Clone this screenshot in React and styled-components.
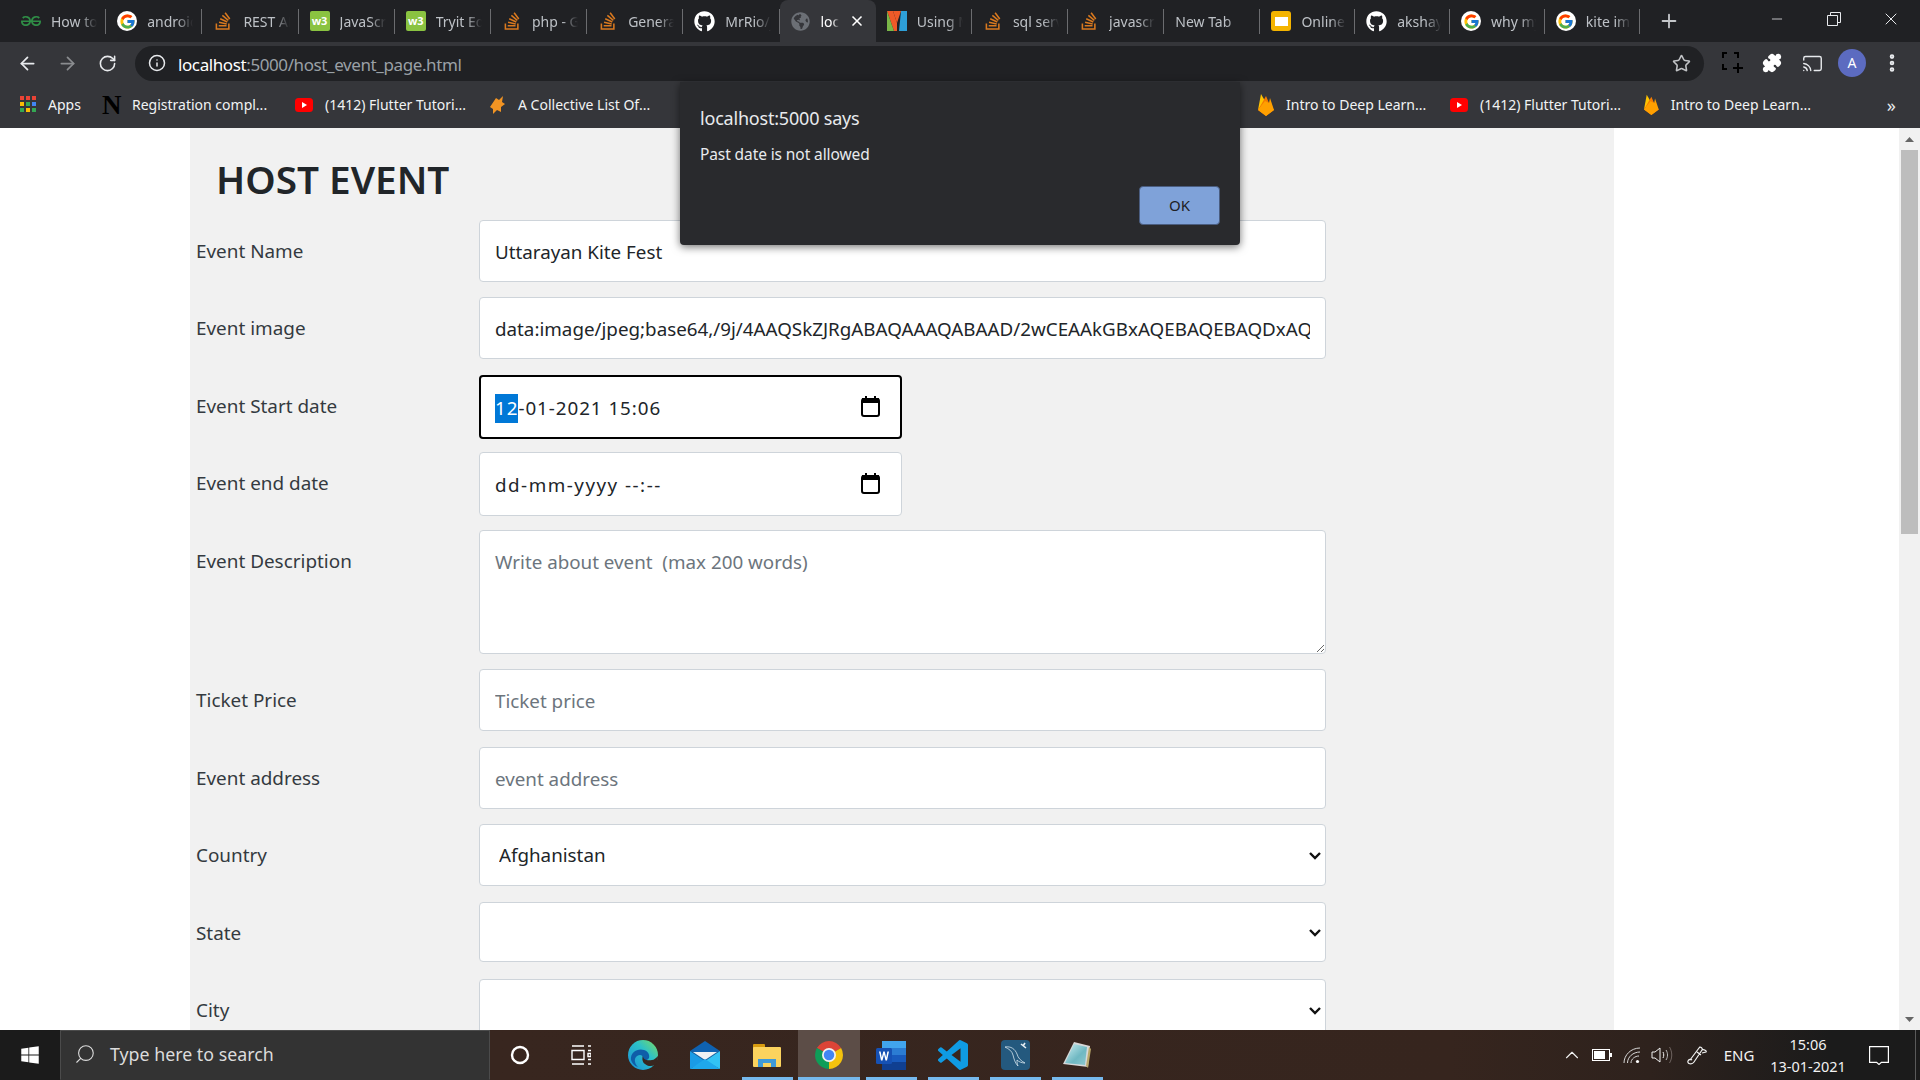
import React from "react";
import styled, {createGlobalStyle} from "styled-components";
import {ArrowLeft, ArrowRight, RotateCw, Info, Star, Puzzle, Cast, MoreVertical, Plus, X, Minus, Search, ChevronUp} from "lucide-react";
import {FaGithub, FaStackOverflow, FaGlobeAmericas, FaWindows} from "react-icons/fa";
import {FcGoogle} from "react-icons/fc";
import {SiGeeksforgeeks} from "react-icons/si";

const UI_FONT = `"Noto Sans", "Open Sans", sans-serif`;

const GlobalStyle = createGlobalStyle`
  html, body {
    margin: 0;
    padding: 0;
    overflow: hidden;
    font-family: ${UI_FONT};
  }
  * {
    box-sizing: border-box;
  }
`;

const Screen = styled.div`
  position: relative;
  width: 1920px;
  height: 1080px;
  display: flex;
  flex-direction: column;
  overflow: hidden;
  background: #fff;
`;

/* chrome tabs */
const TabStrip = styled.div`
  height: 42px;
  flex: none;
  display: flex;
  align-items: center;
  padding-left: 10px;
  background: #202124;
`;

const Tab = styled.div`
  flex: 0 0 96.2px;
  min-width: 0;
  height: 42px;
  display: flex;
  align-items: center;
  color: ${p => (p.$active ? "#fff" : "#bdc1c6")};
  background: ${p => (p.$active ? "#35363a" : "transparent")};
  border-radius: 8px 8px 0 0;
  &:nth-child(n + 14) {
    flex-basis: 94.8px;
  }
`;

const TabInner = styled.div`
  width: 100%;
  min-width: 0;
  height: 25px;
  display: flex;
  align-items: center;
  gap: 10px;
  padding-left: 11px;
  border-right: 1px solid ${p => (p.$active ? "transparent" : "#6b6c6f")};
  font-size: 14px;
`;

const FaviconBox = styled.span`
  flex: 0 0 20px;
  height: 20px;
  display: flex;
  align-items: center;
  justify-content: center;
  color: ${p => p.$color || "#fff"};
`;

const GoogleDisc = styled(FaviconBox)`
  background: #fff;
  border-radius: 50%;
`;

const W3Badge = styled.span`
  flex: 0 0 20px;
  height: 20px;
  border-radius: 2px;
  background: #8ac341;
  color: #fff;
  font-size: 11px;
  font-weight: 700;
  line-height: 20px;
  text-align: center;
`;

const SlidesBadge = styled.span`
  flex: 0 0 20px;
  height: 20px;
  border-radius: 3px;
  background: #f4b400;
  display: flex;
  align-items: center;
  justify-content: center;
  &::before {
    content: "";
    width: 13px;
    height: 9px;
    background: #fff;
  }
`;

const TabTitle = styled.span`
  flex: 1;
  min-width: 0;
  margin-right: 8px;
  overflow: hidden;
  white-space: nowrap;
  -webkit-mask-image: linear-gradient(90deg, #000 65%, transparent 100%);
  mask-image: linear-gradient(90deg, #000 65%, transparent 100%);
`;

const TabClose = styled.span`
  flex: none;
  display: flex;
  margin-right: 10px;
  margin-left: -8px;
  color: #fff;
`;

const NewTab = styled.div`
  margin-left: 18px;
  display: flex;
  color: #c4c7ca;
`;

const WindowControls = styled.div`
  margin-left: auto;
  display: flex;
  height: 42px;
  padding-right: 1px;
  color: #e8eaed;
`;

const WindowButton = styled.div`
  width: 57px;
  height: 38px;
  display: flex;
  align-items: center;
  justify-content: center;
`;

/* address bar */
const Toolbar = styled.div`
  height: 42px;
  flex: none;
  display: flex;
  align-items: center;
  padding: 0 8px 0 7px;
  background: #35363a;
`;

const ToolButton = styled.div`
  width: ${p => p.$w || "40px"};
  height: 36px;
  display: flex;
  align-items: center;
  justify-content: center;
  color: ${p => p.$color || "#e8eaed"};
`;

const Omnibox = styled.div`
  flex: 1;
  height: 35px;
  margin: 0 8px;
  padding: 0 13px;
  display: flex;
  align-items: center;
  gap: 12px;
  border-radius: 18px;
  background: #202124;
  color: #e8eaed;
`;

const UrlText = styled.div`
  flex: 1;
  padding-top: 2px;
  font-size: 17px;
  letter-spacing: -0.4px;
  color: #9aa0a6;
  b {
    font-weight: 400;
    color: #fff;
  }
`;

const Avatar = styled.div`
  width: 28px;
  height: 28px;
  border-radius: 50%;
  background: #5c6bc0;
  color: #fff;
  font-size: 14px;
  line-height: 28px;
  text-align: center;
`;

/* bookmarks */
const BookmarksBar = styled.div`
  height: 44px;
  flex: none;
  display: flex;
  align-items: center;
  padding: 0 0 3px 20px;
  background: #35363a;
`;

const Bookmark = styled.div`
  flex: 0 0 ${p => p.$w}px;
  min-width: 0;
  display: flex;
  align-items: center;
  gap: ${p => p.$gap || 12}px;
  color: #f1f3f4;
  font-size: 14px;
  white-space: nowrap;
`;

const NotionN = styled.span`
  width: 19px;
  font-family: "Liberation Serif", serif;
  font-size: 27px;
  font-weight: 700;
  line-height: 24px;
  color: #000;
`;

const Spacer = styled.div`
  flex: 1;
`;

const MoreBookmarks = styled.div`
  flex: 0 0 109px;
  padding-right: 24px;
  text-align: right;
  font-size: 18px;
  line-height: 20px;
  color: #e8eaed;
`;

/* page */
const Viewport = styled.div`
  flex: 1;
  min-height: 0;
  display: flex;
`;

const PageBody = styled.main`
  flex: 1;
  min-width: 0;
  padding-left: 190px;
  overflow: hidden;
`;

const Panel = styled.div`
  width: 1424px;
  height: 100%;
  padding-left: 6px;
  background: #f1f1f1;
  color: #212529;
`;

const Heading = styled.h1`
  height: 92px;
  margin: 0;
  padding: 23px 0 0 20px;
  font-size: 38.7px;
  font-weight: 600;
  line-height: 56px;
`;

const FormRow = styled.div`
  display: grid;
  grid-template-columns: 283px 847px;
  margin-bottom: ${p => p.$gap}px;
`;

const FieldLabel = styled.label`
  padding-top: 17px;
  font-size: 18.9px;
  line-height: 28px;
  color: #343a40;
`;

const TextField = styled.input`
  display: block;
  width: 100%;
  height: ${p => p.$h || 62}px;
  padding: 1px 15px 0;
  border: 1px solid #ced4da;
  border-radius: 4px;
  background: #fff;
  font-family: ${UI_FONT};
  font-size: 18.8px;
  color: #212529;
  outline: none;
  &::placeholder {
    color: #6c757d;
    opacity: 1;
  }
`;

const TextArea = styled.textarea`
  display: block;
  width: 100%;
  height: 124px;
  padding: 16px 15px;
  border: 1px solid #ced4da;
  border-radius: 4px;
  background: #fff;
  font-family: ${UI_FONT};
  font-size: 18.8px;
  line-height: 30px;
  resize: vertical;
  outline: none;
  &::placeholder {
    color: #6c757d;
    opacity: 1;
  }
`;

const DateField = styled.div`
  width: 423px;
  height: 64px;
  padding: 0 ${p => (p.$focused ? 20 : 21)}px 0 ${p => (p.$focused ? 14 : 15)}px;
  display: flex;
  align-items: center;
  justify-content: space-between;
  border: ${p => (p.$focused ? "2px solid #000" : "1px solid #ced4da")};
  border-radius: 4px;
  background: #fff;
  font-size: 18.8px;
  color: #212529;
  white-space: pre;
`;

const DateText = styled.span`
  padding-top: 2px;
  letter-spacing: ${p => p.$tracking}px;
`;

const DateSegment = styled.span`
  display: inline-block;
  line-height: 29px;
  background: #0078d7;
  color: #fff;
`;

const CalendarGlyph = styled.svg`
  flex: none;
  margin-bottom: 2px;
`;

const SelectWrap = styled.div`
  position: relative;
  height: ${p => p.$h || 62}px;
`;

const Select = styled.select`
  display: block;
  width: 100%;
  height: 100%;
  padding: 0 19px;
  appearance: none;
  border: 1px solid #ced4da;
  border-radius: 4px;
  background: #fff;
  font-family: ${UI_FONT};
  font-size: 18.8px;
  color: #212529;
  outline: none;
`;

const SelectArrow = styled.svg`
  position: absolute;
  right: 5px;
  top: 50%;
  margin-top: -4px;
  pointer-events: none;
`;

const Scrollbar = styled.div`
  flex: 0 0 21px;
  display: flex;
  flex-direction: column;
  align-items: center;
  background: #f1f1f1;
`;

const ScrollArrow = styled.div`
  flex: none;
  height: 22px;
  display: flex;
  align-items: center;
  justify-content: center;
`;

const ScrollThumb = styled.div`
  flex: none;
  width: 17px;
  height: 384px;
  background: #bdbdbd;
`;

/* alert() dialog */
const AlertBox = styled.div`
  position: absolute;
  left: 680px;
  top: 82px;
  width: 560px;
  height: 163px;
  padding: 20px;
  display: flex;
  flex-direction: column;
  border-radius: 0 0 4px 4px;
  background: #292a2d;
  box-shadow: 0 2px 8px rgba(0, 0, 0, 0.55);
  color: #e8eaed;
`;

const AlertTitle = styled.div`
  font-size: 18px;
  line-height: 32px;
  letter-spacing: -0.2px;
`;

const AlertMessage = styled.div`
  margin-top: 8px;
  font-size: 15.5px;
  line-height: 24px;
  letter-spacing: -0.1px;
`;

const AlertOk = styled.button`
  align-self: flex-end;
  width: 81px;
  height: 41px;
  margin-top: 20px;
  padding: 0 0 2px;
  border: 1px solid #4a5d80;
  border-radius: 4px;
  background: #7fa2d9;
  color: #202124;
  font-family: ${UI_FONT};
  font-size: 15px;
`;

/* windows taskbar */
const Taskbar = styled.footer`
  height: 50px;
  flex: none;
  display: flex;
  align-items: stretch;
  color: #fff;
  background: linear-gradient(90deg, #1b1b1b 0, #1b1b1b 60px, #38261f 490px, #36251e 1450px, #2e221d 1650px, #1b1b1b 1830px);
`;

const StartButton = styled.div`
  flex: 0 0 60px;
  display: flex;
  align-items: center;
  justify-content: center;
`;

const SearchBox = styled.div`
  flex: 0 0 430px;
  display: flex;
  align-items: center;
  gap: 14px;
  padding: 0 0 2px 13px;
  border: 1px solid #4b4b4b;
  border-bottom-color: #333;
  background: #333;
  font-size: 17.8px;
  color: #dcdcdc;
`;

const FlipIcon = styled.span`
  display: flex;
  transform: scaleX(-1);
`;

const TaskSlot = styled.div`
  position: relative;
  flex: 0 0 ${p => p.$w || 62}px;
  display: flex;
  align-items: center;
  justify-content: center;
  background: ${p => (p.$active ? "#5c4d47" : "transparent")};
  &::after {
    content: "";
    display: ${p => (p.$open ? "block" : "none")};
    position: absolute;
    left: ${p => (p.$active ? 0 : 6)}px;
    right: ${p => (p.$active ? 0 : 5)}px;
    bottom: 0;
    height: 3px;
    background: #76b9ed;
  }
`;

const Tray = styled.div`
  margin-left: auto;
  display: flex;
  align-items: stretch;
`;

const TrayItem = styled.div`
  flex: 0 0 ${p => p.$w}px;
  display: flex;
  flex-direction: column;
  align-items: center;
  justify-content: center;
  font-size: ${p => (p.$text ? "15px" : "14.5px")};
  line-height: 22px;
  color: #f2f2f2;
`;

const ShowDesktop = styled.div`
  flex: 0 0 13px;
  margin-right: 4px;
  border-right: 1px solid #5a5a5a;
`;

const GoogleIcon = () => <GoogleDisc><FcGoogle size={17}/></GoogleDisc>;
const StackIcon = () => <FaviconBox $color="#d9791f"><FaStackOverflow size={20}/></FaviconBox>;
const W3Icon = () => <W3Badge>w3</W3Badge>;
const GithubIcon = () => <FaviconBox $color="#fff"><FaGithub size={21}/></FaviconBox>;

const VercelV = () => (
    <FaviconBox>
        <svg width="20" height="20" viewBox="0 0 20 20">
            <polygon points="0,0 6,0 10,12 10,20 7,20" fill="#ef5a28"/>
            <polygon points="0,0 7,20 0,20" fill="#7ab648"/>
            <polygon points="14,0 20,0 20,20 12,20" fill="#2e9fd8"/>
            <polygon points="6,0 14,0 10,12" fill="#ef5a28"/>
        </svg>
    </FaviconBox>
);

const tabs = [
    {title: "How to", icon: <FaviconBox $color="#2f8d46"><SiGeeksforgeeks size={20}/></FaviconBox>},
    {title: "android", icon: <GoogleIcon/>},
    {title: "REST API", icon: <StackIcon/>},
    {title: "JavaScript", icon: <W3Icon/>},
    {title: "Tryit Editor", icon: <W3Icon/>},
    {title: "php - Get", icon: <StackIcon/>},
    {title: "General", icon: <StackIcon/>},
    {title: "MrRio/jsPDF", icon: <GithubIcon/>},
    {title: "localhost", icon: <FaviconBox $color="#6b6f75"><FaGlobeAmericas size={19}/></FaviconBox>, active: true},
    {title: "Using Mat", icon: <VercelV/>},
    {title: "sql server", icon: <StackIcon/>},
    {title: "javascript", icon: <StackIcon/>},
    {title: "New Tab"},
    {title: "Online", icon: <SlidesBadge/>},
    {title: "akshay", icon: <GithubIcon/>},
    {title: "why my", icon: <GoogleIcon/>},
    {title: "kite image", icon: <GoogleIcon/>},
];

const AppsIcon = () => (
    <svg width="17" height="17" viewBox="0 0 17 17">
        <rect x="0" y="0" width="4" height="4" fill="#ea4335"/>
        <rect x="6" y="0" width="4" height="4" fill="#ea4335"/>
        <rect x="12" y="0" width="4" height="4" fill="#ea4335"/>
        <rect x="0" y="6" width="4" height="4" fill="#fbbc04"/>
        <rect x="6" y="6" width="4" height="4" fill="#34a853"/>
        <rect x="12" y="6" width="4" height="4" fill="#4285f4"/>
        <rect x="0" y="12" width="4" height="4" fill="#34a853"/>
        <rect x="6" y="12" width="4" height="4" fill="#fbbc04"/>
        <rect x="12" y="12" width="4" height="4" fill="#34a853"/>
    </svg>
);

const YoutubeIcon = () => (
    <svg width="18" height="14" viewBox="0 0 18 14">
        <rect width="18" height="14" rx="3.5" fill="#f00"/>
        <polygon points="7,4 12,7 7,10" fill="#fff"/>
    </svg>
);

const FirebaseIcon = () => (
    <svg width="16" height="23" viewBox="0 0 16 23">
        <polygon points="0,17 3,1 7,8" fill="#ffc400"/>
        <polygon points="0,17 8,3 11,10 16,17 8,23" fill="#f57c00"/>
        <polygon points="0,17 7,8 11,10 12,5 16,17 8,23" fill="#ffa000"/>
    </svg>
);

const StarGroupIcon = () => (
    <svg width="17" height="20" viewBox="0 0 17 20">
        <polygon points="1,12 7,3 10,5 14,1 13,7 16,9 12,12 12,17 8,15 4,19 4,14" fill="#f29423"/>
    </svg>
);

const CaptureIcon = () => (
    <svg width="22" height="24" viewBox="0 0 22 24" fill="none" stroke="#000" strokeWidth="2">
        <path d="M6 2H2v5M13 2h4v5M2 13v5h4M17 12v10M12 17h10"/>
    </svg>
);

const CalendarIcon = () => (
    <CalendarGlyph width="19" height="21" viewBox="0 0 19 21">
        <rect x="4" y="0" width="2" height="3" fill="#000"/>
        <rect x="13" y="0" width="2" height="3" fill="#000"/>
        <rect x="1" y="3" width="17" height="17" rx="2" fill="none" stroke="#000" strokeWidth="2"/>
        <rect x="1" y="2" width="17" height="5" fill="#000"/>
    </CalendarGlyph>
);

const Chevron = () => (
    <SelectArrow width="12" height="10" viewBox="0 0 12 10" fill="none" stroke="#111" strokeWidth="2.4">
        <path d="M1 2l5 5 5-5"/>
    </SelectArrow>
);

const ArrowGlyph = ({down}) => (
    <svg width="9" height="5" viewBox="0 0 9 5">
        <polygon points={down ? "0,0 9,0 4.5,5" : "4.5,0 9,5 0,5"} fill="#666"/>
    </svg>
);

const EdgeIcon = () => (
    <svg width="30" height="30" viewBox="0 0 30 30">
        <defs>
            <linearGradient id="edgeTop" x1="0" y1="1" x2="1" y2="0">
                <stop offset="0" stopColor="#1a8fd8"/>
                <stop offset="0.6" stopColor="#2cc1c8"/>
                <stop offset="1" stopColor="#7fdc5e"/>
            </linearGradient>
        </defs>
        <circle cx="15" cy="15" r="15" fill="url(#edgeTop)"/>
        <path d="M3 20C2 12 10 8 16 10c4 1 6 5 5 8-2 3-6 3-6 0 0-3-3-4-6-2-3 2-3 7 1 11-4-1-6-4-7-7z" fill="#0f5ea8"/>
        <path d="M15 16c0 4 5 5 9 4 2 0 4-2 6-4 0 4-1 7-3 9-4 2-8 1-10-1-3-2-3-6-2-8z" fill="#38261f"/>
    </svg>
);

const MailIcon = () => (
    <svg width="30" height="28" viewBox="0 0 30 28">
        <polygon points="0,10 15,0 30,10 15,20" fill="#0f62b0"/>
        <polygon points="3,11 27,11 15,19" fill="#eef1f3"/>
        <polygon points="0,10 15,20 0,28" fill="#1a9be6"/>
        <polygon points="30,10 15,20 30,28" fill="#32c3f5"/>
        <polygon points="0,28 15,18 30,28" fill="#1fa8ec"/>
    </svg>
);

const FolderIcon = () => (
    <svg width="28" height="23" viewBox="0 0 28 23">
        <rect x="0" y="0" width="12" height="6" rx="1" fill="#d79b10"/>
        <rect x="0" y="3" width="28" height="20" rx="1" fill="#fbd35e"/>
        <path d="M5 23v-8h18v8h-5v-4h-8v4z" fill="#3f9ad8"/>
    </svg>
);

const ChromeIcon = () => (
    <svg width="28" height="28" viewBox="4 4 40 40">
        <path d="M24 24L6.7 14A20 20 0 0 1 41.3 14Z" fill="#db4437"/>
        <path d="M24 24L41.3 14A20 20 0 0 1 24 44Z" fill="#f4c20d"/>
        <path d="M24 24L24 44A20 20 0 0 1 6.7 14Z" fill="#0f9d58"/>
        <circle cx="24" cy="24" r="10" fill="#f1f1f1"/>
        <circle cx="24" cy="24" r="7.500" fill="#4285f4"/>
    </svg>
);

const WordIcon = () => (
    <svg width="30" height="29" viewBox="0 0 30 29">
        <rect x="6" y="0" width="24" height="8" fill="#41a5ee"/>
        <rect x="6" y="7" width="24" height="8" fill="#2b7cd3"/>
        <rect x="6" y="14" width="24" height="8" fill="#185abd"/>
        <rect x="6" y="21" width="24" height="8" fill="#103f91"/>
        <rect x="0" y="7" width="16" height="16" rx="1.5" fill="#1651b4"/>
        <path d="M3 10.500l2 9h1.500l1.500-6 1.500 6h1.500l2-9h-1.600l-1.200 6-1.500-6h-1.400l-1.500 6-1.200-6z" fill="#fff"/>
    </svg>
);

const VsCodeIcon = () => (
    <svg width="30" height="30" viewBox="0 0 24 24" fill="#0f9be3">
        <path d="M23.15 2.587L18.21.21a1.494 1.494 0 0 0-1.705.29l-9.46 8.63-4.12-3.128a.999.999 0 0 0-1.276.057L.327 7.261A1 1 0 0 0 .326 8.74L3.899 12 .326 15.26a1 1 0 0 0 .001 1.479L1.65 17.94a.999.999 0 0 0 1.276.057l4.12-3.128 9.46 8.63a1.492 1.492 0 0 0 1.704.29l4.942-2.377A1.5 1.5 0 0 0 24 20.06V3.939a1.5 1.5 0 0 0-.85-1.352zm-5.146 14.861L10.826 12l7.178-5.448v10.896z"/>
    </svg>
);

const MysqlIcon = () => (
    <svg width="29" height="30" viewBox="0 0 29 30">
        <rect width="29" height="30" rx="4" fill="#24597e"/>
        <path d="M4 7c6-1 10 2 12 7 1 4 4 7 8 9-3 0-6-1-8-3 0 2 0 4 1 6-3-3-4-7-5-11-1-4-4-6-8-8z" fill="none" stroke="#d6e4ee" strokeWidth="0.8"/>
        <path d="M20 4l5 4M24 3l-2 3" fill="none" stroke="#e6eef4" strokeWidth="1.6"/>
    </svg>
);

const NotepadIcon = () => (
    <svg width="28" height="28" viewBox="0 0 28 28">
        <defs>
            <linearGradient id="padFill" x1="0" y1="0" x2="1" y2="1">
                <stop offset="0" stopColor="#cdeff2"/>
                <stop offset="0.6" stopColor="#6fb8c2"/>
                <stop offset="1" stopColor="#8ec9cf"/>
            </linearGradient>
        </defs>
        <polygon points="11,1 27,5 25,26 0,23" fill="#d8d8d8"/>
        <polygon points="11,3 24,6 22,24 2,22" fill="url(#padFill)"/>
        <polygon points="26,6 28,8 25,27 23,25" fill="#b9a86a"/>
    </svg>
);

const TaskViewIcon = () => (
    <svg width="20" height="20" viewBox="0 0 20 20" fill="none" stroke="#fff" strokeWidth="1.4">
        <path d="M1 1h12M1 19h12M1 5.500h12v9H1zM17 1h3M17 5.500h3M17 14.500h3M17 19h3M17 8.500h3v3h-3z"/>
    </svg>
);

const BatteryIcon = () => (
    <svg width="20" height="12" viewBox="0 0 20 12">
        <rect x="0.5" y="0.5" width="17" height="11" fill="none" stroke="#fff"/>
        <rect x="2" y="2" width="11" height="8" fill="#fff"/>
        <rect x="18" y="4" width="2" height="4" fill="#fff"/>
    </svg>
);

const WifiIcon = () => (
    <svg width="18" height="17" viewBox="0 0 18 17" fill="none" stroke="#d8d8d8" strokeWidth="1">
        <path d="M1 16C1 8 8 1 17 1M4.500 16C4.500 10 10 5 17 5M8 16c0-4 4-7 8-7"/>
        <circle cx="14.5" cy="14.5" r="1.6" fill="#fff" stroke="none"/>
    </svg>
);

const SpeakerIcon = () => (
    <svg width="22" height="18" viewBox="0 0 22 18" fill="none" stroke="#f2f2f2" strokeWidth="1">
        <path d="M1 6h3l5-4v14l-5-4H1zM12 6c1 2 1 4 0 6"/>
        <path d="M15 4c2 3 2 7 0 10" stroke="#bbb"/>
        <path d="M18.500 1c3 5 3 11 0 16" stroke="#6f6460"/>
    </svg>
);

const PenIcon = () => (
    <svg width="21" height="21" viewBox="0 0 21 21" fill="none" stroke="#f2f2f2" strokeWidth="1.2">
        <path d="M3 15L12 3c1-2 4 0 3 2L7 17c-2 3-7 2-6-1 1-2 3-2 4-1M15 5c2-1 5 1 4 2l-4 1M10 7l4 3"/>
    </svg>
);

const NotifyIcon = () => (
    <svg width="20" height="19" viewBox="0 0 20 19" fill="none" stroke="#fff" strokeWidth="1.2">
        <path d="M.6.6h18.800v15.800h-7L10 18.500l-2.400-2.100h-7z"/>
    </svg>
);

const App = () => {
    return (
        <Screen>
            <GlobalStyle/>
            <TabStrip>
                {tabs.map(tab => (
                    <Tab key={tab.title} $active={tab.active}>
                        <TabInner $active={tab.active}>
                            {tab.icon}
                            <TabTitle>{tab.title}</TabTitle>
                            {tab.active && <TabClose><X size={16} strokeWidth={2.5}/></TabClose>}
                        </TabInner>
                    </Tab>
                ))}
                <NewTab><Plus size={22} strokeWidth={2}/></NewTab>
                <WindowControls>
                    <WindowButton><Minus size={16} strokeWidth={1.2}/></WindowButton>
                    <WindowButton>
                        <svg width="14" height="14" viewBox="0 0 14 14" fill="none" stroke="#e8eaed">
                            <path d="M.5 3.500h10v10H.5zM3.500 3.500V.5h10v10h-3"/>
                        </svg>
                    </WindowButton>
                    <WindowButton><X size={20} strokeWidth={1.2}/></WindowButton>
                </WindowControls>
            </TabStrip>

            <Toolbar>
                <ToolButton><ArrowLeft size={21} strokeWidth={2}/></ToolButton>
                <ToolButton $color="#8a8c8f"><ArrowRight size={21} strokeWidth={2}/></ToolButton>
                <ToolButton><RotateCw size={19} strokeWidth={2}/></ToolButton>
                <Omnibox>
                    <Info size={18} strokeWidth={2}/>
                    <UrlText><b>localhost</b>:5000/host_event_page.html</UrlText>
                    <Star size={19} strokeWidth={2} color="#c0c2c5"/>
                </Omnibox>
                <ToolButton><CaptureIcon/></ToolButton>
                <ToolButton><Puzzle size={20} fill="#fff" color="#fff"/></ToolButton>
                <ToolButton><Cast size={21} strokeWidth={1.6}/></ToolButton>
                <ToolButton><Avatar>A</Avatar></ToolButton>
                <ToolButton><MoreVertical size={22} strokeWidth={3}/></ToolButton>
            </Toolbar>

            <BookmarksBar>
                <Bookmark $w={82} $gap={11}><AppsIcon/>Apps</Bookmark>
                <Bookmark $w={193} $gap={11}><NotionN>N</NotionN>Registration compl...</Bookmark>
                <Bookmark $w={194}><YoutubeIcon/>(1412) Flutter Tutori...</Bookmark>
                <Bookmark $w={163}><StarGroupIcon/>A Collective List Of...</Bookmark>
                <Spacer/>
                <Bookmark $w={192}><FirebaseIcon/>Intro to Deep Learn...</Bookmark>
                <Bookmark $w={194}><YoutubeIcon/>(1412) Flutter Tutori...</Bookmark>
                <Bookmark $w={167}><FirebaseIcon/>Intro to Deep Learn...</Bookmark>
                <MoreBookmarks>»</MoreBookmarks>
            </BookmarksBar>

            <Viewport>
                <PageBody>
                    <Panel>
                        <Heading>HOST EVENT</Heading>
                        <FormRow $gap={15}>
                            <FieldLabel>Event Name</FieldLabel>
                            <TextField defaultValue="Uttarayan Kite Fest"/>
                        </FormRow>
                        <FormRow $gap={16}>
                            <FieldLabel>Event image</FieldLabel>
                            <TextField defaultValue="data:image/jpeg;base64,/9j/4AAQSkZJRgABAQAAAQABAAD/2wCEAAkGBxAQEBAQEBAQDxAQEBAQ"/>
                        </FormRow>
                        <FormRow $gap={13}>
                            <FieldLabel>Event Start date</FieldLabel>
                            <DateField $focused>
                                <DateText $tracking={0.95}><DateSegment>12</DateSegment>-01-2021 15:06</DateText>
                                <CalendarIcon/>
                            </DateField>
                        </FormRow>
                        <FormRow $gap={14}>
                            <FieldLabel>Event end date</FieldLabel>
                            <DateField>
                                <DateText $tracking={1.5}>dd-mm-yyyy --:--</DateText>
                                <CalendarIcon/>
                            </DateField>
                        </FormRow>
                        <FormRow $gap={15}>
                            <FieldLabel>Event Description</FieldLabel>
                            <TextArea placeholder="Write about event  (max 200 words)"/>
                        </FormRow>
                        <FormRow $gap={16}>
                            <FieldLabel>Ticket Price</FieldLabel>
                            <TextField placeholder="Ticket price"/>
                        </FormRow>
                        <FormRow $gap={15}>
                            <FieldLabel>Event address</FieldLabel>
                            <TextField placeholder="event address"/>
                        </FormRow>
                        <FormRow $gap={16}>
                            <FieldLabel>Country</FieldLabel>
                            <SelectWrap>
                                <Select defaultValue="Afghanistan">
                                    <option>Afghanistan</option>
                                </Select>
                                <Chevron/>
                            </SelectWrap>
                        </FormRow>
                        <FormRow $gap={17}>
                            <FieldLabel>State</FieldLabel>
                            <SelectWrap $h={60}>
                                <Select><option></option></Select>
                                <Chevron/>
                            </SelectWrap>
                        </FormRow>
                        <FormRow $gap={16}>
                            <FieldLabel>City</FieldLabel>
                            <SelectWrap>
                                <Select><option></option></Select>
                                <Chevron/>
                            </SelectWrap>
                        </FormRow>
                    </Panel>
                </PageBody>
                <Scrollbar>
                    <ScrollArrow><ArrowGlyph/></ScrollArrow>
                    <ScrollThumb/>
                    <Spacer/>
                    <ScrollArrow><ArrowGlyph down/></ScrollArrow>
                </Scrollbar>
            </Viewport>

            <AlertBox role="alertdialog">
                <AlertTitle>localhost:5000 says</AlertTitle>
                <AlertMessage>Past date is not allowed</AlertMessage>
                <AlertOk>OK</AlertOk>
            </AlertBox>

            <Taskbar>
                <StartButton><FaWindows size={20}/></StartButton>
                <SearchBox>
                    <FlipIcon><Search size={22} strokeWidth={1.2}/></FlipIcon>
                    Type here to search
                </SearchBox>
                <TaskSlot $w={60}>
                    <svg width="20" height="20" viewBox="0 0 20 20" fill="none" stroke="#fff" strokeWidth="2.4"><circle cx="10" cy="10" r="8"/></svg>
                </TaskSlot>
                <TaskSlot><TaskViewIcon/></TaskSlot>
                <TaskSlot><EdgeIcon/></TaskSlot>
                <TaskSlot><MailIcon/></TaskSlot>
                <TaskSlot $open><FolderIcon/></TaskSlot>
                <TaskSlot $open $active><ChromeIcon/></TaskSlot>
                <TaskSlot $open><WordIcon/></TaskSlot>
                <TaskSlot $open><VsCodeIcon/></TaskSlot>
                <TaskSlot $open><MysqlIcon/></TaskSlot>
                <TaskSlot $open><NotepadIcon/></TaskSlot>
                <Tray>
                    <TrayItem $w={30}><ChevronUp size={22} strokeWidth={1.2}/></TrayItem>
                    <TrayItem $w={30}><BatteryIcon/></TrayItem>
                    <TrayItem $w={30}><WifiIcon/></TrayItem>
                    <TrayItem $w={30}><SpeakerIcon/></TrayItem>
                    <TrayItem $w={40}><PenIcon/></TrayItem>
                    <TrayItem $w={44} $text>ENG</TrayItem>
                    <TrayItem $w={94}><span>15:06</span><span>13-01-2021</span></TrayItem>
                    <TrayItem $w={48}><NotifyIcon/></TrayItem>
                    <ShowDesktop/>
                </Tray>
            </Taskbar>
        </Screen>
    );
};

export default App;
